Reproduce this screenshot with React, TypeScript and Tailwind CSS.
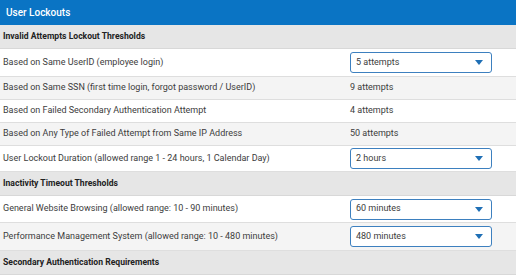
import React from 'react';

type Row =
  | { kind: 'section'; label: string }
  | { kind: 'row'; label: string; value: string; select?: boolean; alt?: boolean; h: string };

const rows: Row[] = [
  { kind: 'section', label: 'Invalid Attempts Lockout Thresholds' },
  { kind: 'row', label: 'Based on Same UserID (employee login)', value: '5 attempts', select: true, h: 'h-[28px]' },
  { kind: 'row', label: 'Based on Same SSN (first time login, forgot password / UserID)', value: '9 attempts', alt: true, h: 'h-[23px]' },
  { kind: 'row', label: 'Based on Failed Secondary Authentication Attempt', value: '4 attempts', h: 'h-[23px]' },
  { kind: 'row', label: 'Based on Any Type of Failed Attempt from Same IP Address', value: '50 attempts', alt: true, h: 'h-[23px]' },
  { kind: 'row', label: 'User Lockout Duration (allowed range 1 - 24 hours, 1 Calendar Day)', value: '2 hours', select: true, h: 'h-[26px]' },
  { kind: 'section', label: 'Inactivity Timeout Thresholds' },
  { kind: 'row', label: 'General Website Browsing (allowed range: 10 - 90 minutes)', value: '60 minutes', select: true, h: 'h-[27px]' },
  { kind: 'row', label: 'Performance Management System (allowed range: 10 - 480 minutes)', value: '480 minutes', select: true, alt: true, h: 'h-[28px]' },
  { kind: 'section', label: 'Secondary Authentication Requirements' },
];

function FakeSelect({ value }: { value: string }) {
  return (
    <div className="flex h-[21px] w-[142px] items-center justify-between rounded-[3px] border border-[#3d80bf] bg-white pl-[5px] pr-[8px]">
      <span>{value}</span>
      <svg width="8" height="5" viewBox="0 0 8 5">
        <path d="M0 0 H8 L4 5 Z" fill="#1f6fb5" />
      </svg>
    </div>
  );
}

export default function App() {
  return (
    <div className="w-[516px] h-[275px] overflow-hidden bg-white text-[9px] text-[#3c3c3c]" style={{ fontFamily: 'Roboto, "Liberation Sans", sans-serif' }}>
      <div className="flex h-[25px] items-center bg-[#0a74c4] pl-[6px] text-[10px] font-medium text-white">
        User Lockouts
      </div>
      {rows.map((r, i) =>
        r.kind === 'section' ? (
          <div key={i} className="flex h-[24px] items-center border-b border-[#d8d8d8] bg-[#e6e6e6] pl-[3px] text-[8.6px] font-bold text-[#222]">
            {r.label}
          </div>
        ) : (
          <div key={i} className={`flex ${r.h} items-center border-b border-[#dedede] ${r.alt ? 'bg-[#f4f4f4]' : 'bg-white'}`}>
            <div className="w-[350px] shrink-0 pl-[3px]">{r.label}</div>
            {r.select ? <FakeSelect value={r.value} /> : <span>{r.value}</span>}
          </div>
        )
      )}
    </div>
  );
}
